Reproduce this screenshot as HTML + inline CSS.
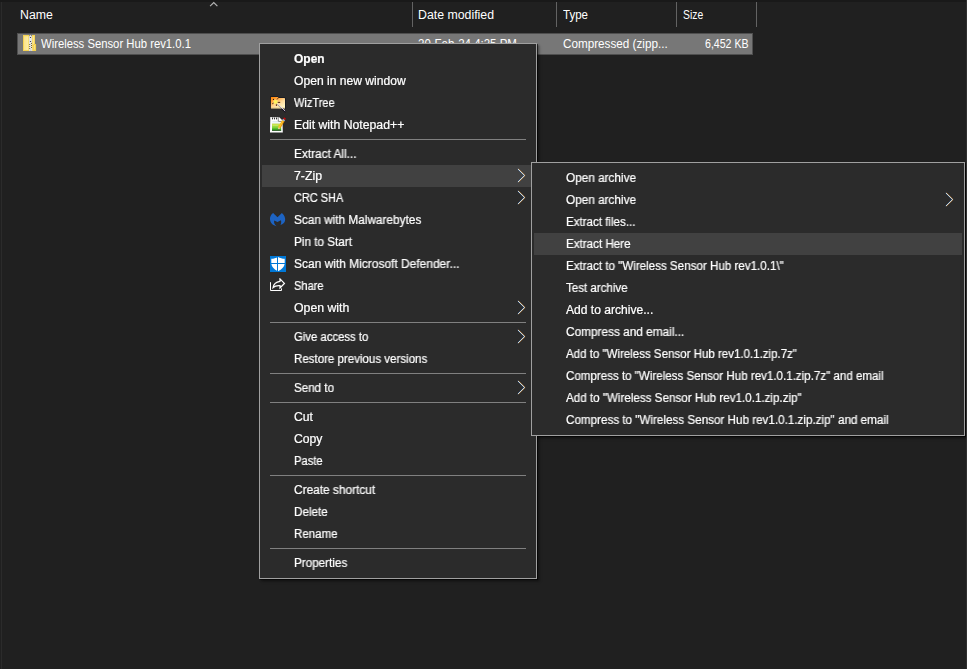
<!DOCTYPE html><html><head><meta charset="utf-8"><title>Explorer</title><style>
html,body{margin:0;padding:0}
body{width:967px;height:669px;overflow:hidden;background:#202020;position:relative;font-family:"Liberation Sans",sans-serif;font-size:12px;color:#fff}
.a{position:absolute}
.t{position:absolute;white-space:pre;transform-origin:0 50%;display:block}
.g{will-change:transform;-webkit-text-stroke:0.22px #fff}
.menu{position:absolute;box-sizing:border-box;background:#2b2b2b;border:1px solid #a0a0a0;box-shadow:1px 1px 0 0 rgba(0,0,0,.58),2px 2px 2px 0 rgba(0,0,0,.36),3px 3px 3px rgba(0,0,0,.12)}
.hov{position:absolute;background:#414141;height:22px}
.sep{position:absolute;height:1px;background:#808080}
.div{position:absolute;top:2px;width:1px;height:25px;background:#636363}
.chev{position:absolute;width:9px;height:15px}
.ic{position:absolute;width:16px;height:16px}
</style></head><body>
<div class="a" style="left:0;top:0;width:967px;height:2px;background:#191919"></div>
<div class="a" style="left:1px;top:2px;width:1px;height:667px;background:#2b2b2b"></div>
<div class="div" style="left:412px"></div>
<div class="div" style="left:556px"></div>
<div class="div" style="left:676px"></div>
<div class="div" style="left:756px"></div>
<svg class="a" style="left:208px;top:1px" width="12" height="8" viewBox="0 0 12 8"><path d="M2.1 5.2 L5.75 1.55 L9.4 5.2" fill="none" stroke="#b4b4b4" stroke-width="1.15"/></svg>
<div class="a" style="left:17px;top:33px;width:736px;height:22px;box-sizing:border-box;background:#777777;border:1px solid #4f4f4f"></div>
<span class="t" style="left:19.69px;top:3px;height:25px;line-height:25px;transform:scaleX(1.0258);">Name</span>
<span class="t" style="left:418.17px;top:3px;height:25px;line-height:25px;transform:scaleX(1.0272);">Date modified</span>
<span class="t" style="left:562.72px;top:3px;height:25px;line-height:25px;transform:scaleX(0.9575);">Type</span>
<span class="t" style="left:682.63px;top:3px;height:25px;line-height:25px;transform:scaleX(0.8637);">Size</span>
<span class="t" style="left:40.83px;top:33px;height:22px;line-height:22px;transform:scaleX(0.9405);">Wireless Sensor Hub rev1.0.1</span>
<span class="t" style="left:418.40px;top:33px;height:22px;line-height:22px;transform:scaleX(0.9566);">20-Feb-24 4:25 PM</span>
<span class="t" style="left:563.17px;top:33px;height:22px;line-height:22px;transform:scaleX(0.9749);">Compressed (zipp...</span>
<span class="t" style="left:704.66px;top:33px;height:22px;line-height:22px;transform:scaleX(0.8825);">6,452 KB</span>
<svg class="a" style="left:20px;top:33px" width="20" height="20" viewBox="20 33 20 20">
<defs><linearGradient id="zg" x1="0" y1="0" x2="1" y2="0"><stop offset="0" stop-color="#fbe38a"/><stop offset="1" stop-color="#fdeea6"/></linearGradient></defs>
<rect x="23" y="35" width="6.2" height="16" fill="#f5d352"/>
<rect x="24" y="36.2" width="4.4" height="13.8" fill="url(#zg)"/>
<rect x="32" y="35" width="3" height="16" fill="#f5d352"/>
<rect x="32.6" y="36.2" width="1.6" height="8" fill="#fbe68f"/>
<rect x="34" y="44" width="2.1" height="7" fill="#f3cf4a"/>
<rect x="34.2" y="45" width="0.9" height="4.6" fill="#fbe68f"/>
<rect x="29" y="43" width="3.2" height="8" fill="#e9e9e9"/>
<path d="M30.5 34.9 L32 36.6 L32 43.2 L29 43.2 L29 36.6 Z" fill="#d9d9d9"/>
<path d="M30.5 35.3 L31.4 36.6 L31.4 43 L29.6 43 L29.6 36.6 Z" fill="#ececec"/>
<circle cx="30.5" cy="37.5" r="0.62" fill="#2a2a2a"/>
<circle cx="30.5" cy="41.5" r="0.62" fill="#2a2a2a"/>
<g fill="#6a5a1c"><rect x="31" y="43" width="1" height="0.9"/><rect x="29.2" y="44" width="1" height="0.9"/><rect x="31" y="45" width="1" height="0.9"/><rect x="29.2" y="46" width="1" height="0.9"/><rect x="31" y="47" width="1" height="0.9"/><rect x="29.2" y="48" width="1" height="0.9"/></g>
<rect x="29.6" y="49.4" width="2" height="1.6" fill="#cfcfcf"/>
</svg>

<div class="menu" style="left:259px;top:43px;width:278px;height:536px"></div>
<div class="hov" style="left:262px;top:165px;width:272px"></div>
<div class="sep" style="left:270px;top:139px;width:256px"></div>
<div class="sep" style="left:270px;top:322px;width:256px"></div>
<div class="sep" style="left:270px;top:373px;width:256px"></div>
<div class="sep" style="left:270px;top:402px;width:256px"></div>
<div class="sep" style="left:270px;top:475px;width:256px"></div>
<div class="sep" style="left:270px;top:548px;width:256px"></div>
<svg class="chev" style="left:517.2px;top:167.8px" viewBox="0 0 9 15"><g fill="none"><path d="M1.5 1 L8.1 7.5 L1.5 14" stroke="#d9822b" stroke-width=".8"/><path d="M.55 1 L7.15 7.5 L.55 14" stroke="#3b78d8" stroke-width=".7" opacity=".8"/><path d="M1 1 L7.6 7.5 L1 14" stroke="#eaffff" stroke-width=".8"/></g></svg>
<svg class="chev" style="left:517.2px;top:189.8px" viewBox="0 0 9 15"><g fill="none"><path d="M1.5 1 L8.1 7.5 L1.5 14" stroke="#d9822b" stroke-width=".8"/><path d="M.55 1 L7.15 7.5 L.55 14" stroke="#3b78d8" stroke-width=".7" opacity=".8"/><path d="M1 1 L7.6 7.5 L1 14" stroke="#eaffff" stroke-width=".8"/></g></svg>
<svg class="chev" style="left:517.2px;top:299.8px" viewBox="0 0 9 15"><g fill="none"><path d="M1.5 1 L8.1 7.5 L1.5 14" stroke="#d9822b" stroke-width=".8"/><path d="M.55 1 L7.15 7.5 L.55 14" stroke="#3b78d8" stroke-width=".7" opacity=".8"/><path d="M1 1 L7.6 7.5 L1 14" stroke="#eaffff" stroke-width=".8"/></g></svg>
<svg class="chev" style="left:517.2px;top:328.8px" viewBox="0 0 9 15"><g fill="none"><path d="M1.5 1 L8.1 7.5 L1.5 14" stroke="#d9822b" stroke-width=".8"/><path d="M.55 1 L7.15 7.5 L.55 14" stroke="#3b78d8" stroke-width=".7" opacity=".8"/><path d="M1 1 L7.6 7.5 L1 14" stroke="#eaffff" stroke-width=".8"/></g></svg>
<svg class="chev" style="left:517.2px;top:379.8px" viewBox="0 0 9 15"><g fill="none"><path d="M1.5 1 L8.1 7.5 L1.5 14" stroke="#d9822b" stroke-width=".8"/><path d="M.55 1 L7.15 7.5 L.55 14" stroke="#3b78d8" stroke-width=".7" opacity=".8"/><path d="M1 1 L7.6 7.5 L1 14" stroke="#eaffff" stroke-width=".8"/></g></svg>
<span class="t g" style="left:294.00px;top:48px;height:22px;line-height:22px;transform:scaleX(0.9963);font-weight:bold;">Open</span>
<span class="t g" style="left:294.00px;top:70px;height:22px;line-height:22px;transform:scaleX(1.0088);">Open in new window</span>
<span class="t g" style="left:294.00px;top:92px;height:22px;line-height:22px;transform:scaleX(0.9196);">WizTree</span>
<span class="t g" style="left:294.00px;top:114px;height:22px;line-height:22px;transform:scaleX(1.0205);">Edit with Notepad++</span>
<span class="t g" style="left:294.00px;top:143px;height:22px;line-height:22px;transform:scaleX(0.9877);">Extract All...</span>
<span class="t g" style="left:294.00px;top:165px;height:22px;line-height:22px;transform:scaleX(1.0239);">7-Zip</span>
<span class="t g" style="left:294.00px;top:187px;height:22px;line-height:22px;transform:scaleX(0.9128);">CRC SHA</span>
<span class="t g" style="left:294.00px;top:209px;height:22px;line-height:22px;transform:scaleX(0.9832);">Scan with Malwarebytes</span>
<span class="t g" style="left:294.00px;top:231px;height:22px;line-height:22px;transform:scaleX(0.9773);">Pin to Start</span>
<span class="t g" style="left:294.00px;top:253px;height:22px;line-height:22px;transform:scaleX(0.9966);">Scan with Microsoft Defender...</span>
<span class="t g" style="left:294.00px;top:275px;height:22px;line-height:22px;transform:scaleX(0.9221);">Share</span>
<span class="t g" style="left:294.00px;top:297px;height:22px;line-height:22px;transform:scaleX(1.0233);">Open with</span>
<span class="t g" style="left:294.00px;top:326px;height:22px;line-height:22px;transform:scaleX(0.9442);">Give access to</span>
<span class="t g" style="left:294.00px;top:348px;height:22px;line-height:22px;transform:scaleX(0.9602);">Restore previous versions</span>
<span class="t g" style="left:294.00px;top:377px;height:22px;line-height:22px;transform:scaleX(0.9671);">Send to</span>
<span class="t g" style="left:294.00px;top:406px;height:22px;line-height:22px;transform:scaleX(1.0150);">Cut</span>
<span class="t g" style="left:294.00px;top:428px;height:22px;line-height:22px;transform:scaleX(1.0158);">Copy</span>
<span class="t g" style="left:294.00px;top:450px;height:22px;line-height:22px;transform:scaleX(0.9314);">Paste</span>
<span class="t g" style="left:294.00px;top:479px;height:22px;line-height:22px;transform:scaleX(0.9905);">Create shortcut</span>
<span class="t g" style="left:294.00px;top:501px;height:22px;line-height:22px;transform:scaleX(0.9727);">Delete</span>
<span class="t g" style="left:294.00px;top:523px;height:22px;line-height:22px;transform:scaleX(0.9595);">Rename</span>
<span class="t g" style="left:294.00px;top:552px;height:22px;line-height:22px;transform:scaleX(0.9733);">Properties</span>
<svg class="a" style="left:268px;top:94px" width="20" height="20" viewBox="268 94 20 20">
<defs><linearGradient id="wg" x1="0" y1="0" x2="0.75" y2="1"><stop offset="0" stop-color="#ff8200"/><stop offset="0.3" stop-color="#ffa640"/><stop offset="0.62" stop-color="#ffdc9c"/><stop offset="1" stop-color="#fff6c6"/></linearGradient></defs>
<path d="M270.3 96.4 H278 L278.9 97.5 H284.6 Q285.6 97.5 285.6 98.5 V109.1 H270.3 Z" fill="#0b0f1c"/>
<path d="M270.9 97 H277.8 L278.6 98.1 H284.4 Q285 98.2 285 98.8 V108.5 H270.9 Z" fill="url(#wg)"/>
<rect x="270.9" y="107.6" width="14.1" height="0.9" fill="#c9b070" opacity=".7"/>
<g stroke="#3a1408" stroke-width="0.9" stroke-linecap="round"><path d="M277.6 102.4 H279.8"/><path d="M276.4 103.8 V105.6"/><path d="M273.9 102.8 L272.6 103.6"/><path d="M277.2 99.2 L277.8 98.5"/></g>
<circle cx="273.4" cy="99.4" r="0.55" fill="#150a04"/>
<path d="M282.4 108.9 L285.3 111.5" stroke="#15101c" stroke-width="1.7" stroke-linecap="round"/><path d="M277.4 104.2 L282.4 108.9" stroke="#6a5a58" stroke-width="1.3" opacity=".55"/>
<path d="M276.6 102.9 L284.9 110.7" stroke="#e9e2f2" stroke-width="0.95" stroke-linecap="round"/>
<circle cx="275.6" cy="101.9" r="1.95" fill="#fff02e"/>
<circle cx="275.6" cy="101.9" r="2.6" fill="#fff6a0" opacity=".4"/>
</svg>
<svg class="a" style="left:268px;top:115px" width="20" height="20" viewBox="268 115 20 20">
<defs><linearGradient id="ng" x1="0" y1="0" x2="0" y2="1"><stop offset="0" stop-color="#dbe84f"/><stop offset="0.55" stop-color="#7fd23a"/><stop offset="0.85" stop-color="#2f9e1e"/><stop offset="0.86" stop-color="#0a5200"/><stop offset="1" stop-color="#064000"/></linearGradient>
<linearGradient id="pg" x1="0" y1="0" x2="1" y2="0"><stop offset="0" stop-color="#ffc21a"/><stop offset="1" stop-color="#e78f00"/></linearGradient></defs>
<path d="M270.3 117 H279 L282.5 120.6 L282.8 132.6 H270 Z" fill="#fdfdfd"/>
<path d="M278.3 117 V121.3 H282.5" fill="none" stroke="#555" stroke-width="0.8"/>
<path d="M278.8 117.6 L282 120.8 H278.8 Z" fill="#fff"/>
<g fill="#1a1a1a"><path d="M271.7 117.5 h1.6 l-.8 2.4z"/><path d="M273.7 117.5 h1.6 l-.8 2.4z"/><path d="M275.8 117.5 h1.6 l-.8 2.4z"/></g>
<rect x="272.4" y="121" width="5.8" height="0.7" fill="#cfdfec"/>
<rect x="272.2" y="122.8" width="9" height="0.9" fill="#c9dcf0"/>
<rect x="272" y="123.6" width="9.2" height="7.2" fill="url(#ng)"/>
<rect x="272.6" y="125.3" width="5.6" height="0.5" fill="#e6f2a0" opacity=".7"/>
<g transform="translate(278 129.8) rotate(30.5)">
<rect x="-1.35" y="-10.6" width="2.7" height="8.4" fill="url(#pg)"/>
<rect x="-0.35" y="-10.6" width="0.6" height="8.4" fill="#ffd65a" opacity=".8"/>
<path d="M-1.35 -2.2 L0 0 L1.35 -2.2Z" fill="#e8cf9a"/>
<path d="M-0.5 -0.95 L0 0 L0.5 -0.95Z" fill="#2c1e0c"/>
<rect x="-1.2" y="-12" width="2.4" height="1.5" fill="#b9cbe2"/>
<rect x="-1.2" y="-11.5" width="2.4" height="0.45" fill="#7f93b5"/>
<path d="M-1.2 -12 V-13 Q-1.2 -14 0 -14 Q1.2 -14 1.2 -13 V-12Z" fill="#c00808"/>
</g>
</svg>
<svg class="a" style="left:268px;top:210px" width="20" height="20" viewBox="-2 -2 20 20">
<path d="M3.1 1 L7.5 5.3 L11.9 1 C14.4 3 15.8 6.3 15 9 C14.3 11.2 12.6 12.5 10.4 12.8 C11.4 11.2 11.4 9.6 10.9 8.2 L7.5 10.1 L4.2 8.4 C3.7 10.6 4.6 12.8 6.6 14.2 C3 13.7 0.4 11 0 7.6 C-0.3 5 0.9 2.6 3.1 1 Z" fill="#1d63c2"/>
</svg>
<svg class="a" style="left:270px;top:256px" width="16" height="16" viewBox="0 0 16 16">
<rect width="16" height="16" fill="#0078d7"/>
<path d="M8 1 C6 2.2 3.6 2.8 1.3 2.8 V7 C1.3 10.6 4.2 13.6 8 15.2 C11.8 13.6 14.7 10.6 14.7 7 V2.8 C12.4 2.8 10 2.2 8 1 Z" fill="#fff"/>
<rect x="7" y="0" width="1" height="16" fill="#0078d7"/>
<rect x="0" y="7" width="16" height="1" fill="#0078d7"/>
</svg>
<svg class="a" style="left:270px;top:278px" width="16" height="16" viewBox="0 0 16 16">
<path d="M0.5 4.2 V12.5 H11.5 V10.4" fill="none" stroke="#fff" stroke-width="1"/>
<path d="M10 0.9 L14.4 5.4 L10 9.9 V7.6 C7 7.3 4.7 8 3.1 9.6 C3.5 6.5 6 3.8 10 3.3 Z" fill="none" stroke="#fff" stroke-width="1.25" stroke-linejoin="miter"/>
</svg>

<div class="menu" style="left:531px;top:162px;width:434px;height:274px"></div>
<div class="hov" style="left:534px;top:233px;width:428px"></div>
<svg class="chev" style="left:945.2px;top:191.8px" viewBox="0 0 9 15"><g fill="none"><path d="M1.5 1 L8.1 7.5 L1.5 14" stroke="#d9822b" stroke-width=".8"/><path d="M.55 1 L7.15 7.5 L.55 14" stroke="#3b78d8" stroke-width=".7" opacity=".8"/><path d="M1 1 L7.6 7.5 L1 14" stroke="#eaffff" stroke-width=".8"/></g></svg>
<span class="t g" style="left:566.00px;top:167px;height:22px;line-height:22px;transform:scaleX(0.9813);">Open archive</span>
<span class="t g" style="left:566.00px;top:189px;height:22px;line-height:22px;transform:scaleX(0.9813);">Open archive</span>
<span class="t g" style="left:566.00px;top:211px;height:22px;line-height:22px;transform:scaleX(0.9642);">Extract files...</span>
<span class="t g" style="left:566.00px;top:233px;height:22px;line-height:22px;transform:scaleX(0.9687);">Extract Here</span>
<span class="t g" style="left:566.00px;top:255px;height:22px;line-height:22px;transform:scaleX(0.9664);">Extract to "Wireless Sensor Hub rev1.0.1\"</span>
<span class="t g" style="left:566.00px;top:277px;height:22px;line-height:22px;transform:scaleX(0.9633);">Test archive</span>
<span class="t g" style="left:566.00px;top:299px;height:22px;line-height:22px;transform:scaleX(1.0065);">Add to archive...</span>
<span class="t g" style="left:566.00px;top:321px;height:22px;line-height:22px;transform:scaleX(0.9852);">Compress and email...</span>
<span class="t g" style="left:566.00px;top:343px;height:22px;line-height:22px;transform:scaleX(0.9598);">Add to "Wireless Sensor Hub rev1.0.1.zip.7z"</span>
<span class="t g" style="left:566.00px;top:365px;height:22px;line-height:22px;transform:scaleX(0.9644);">Compress to "Wireless Sensor Hub rev1.0.1.zip.7z" and email</span>
<span class="t g" style="left:566.00px;top:387px;height:22px;line-height:22px;transform:scaleX(0.9686);">Add to "Wireless Sensor Hub rev1.0.1.zip.zip"</span>
<span class="t g" style="left:566.00px;top:409px;height:22px;line-height:22px;transform:scaleX(0.9715);">Compress to "Wireless Sensor Hub rev1.0.1.zip.zip" and email</span>
<div class="a" style="left:531px;top:436px;width:5px;height:8px;background:#2b2b2b"></div>
<div class="a" style="left:536px;top:436px;width:1px;height:8px;background:#a0a0a0"></div>
<div class="a" style="left:966px;top:0;width:1px;height:669px;background:#303030"></div>
</body></html>
